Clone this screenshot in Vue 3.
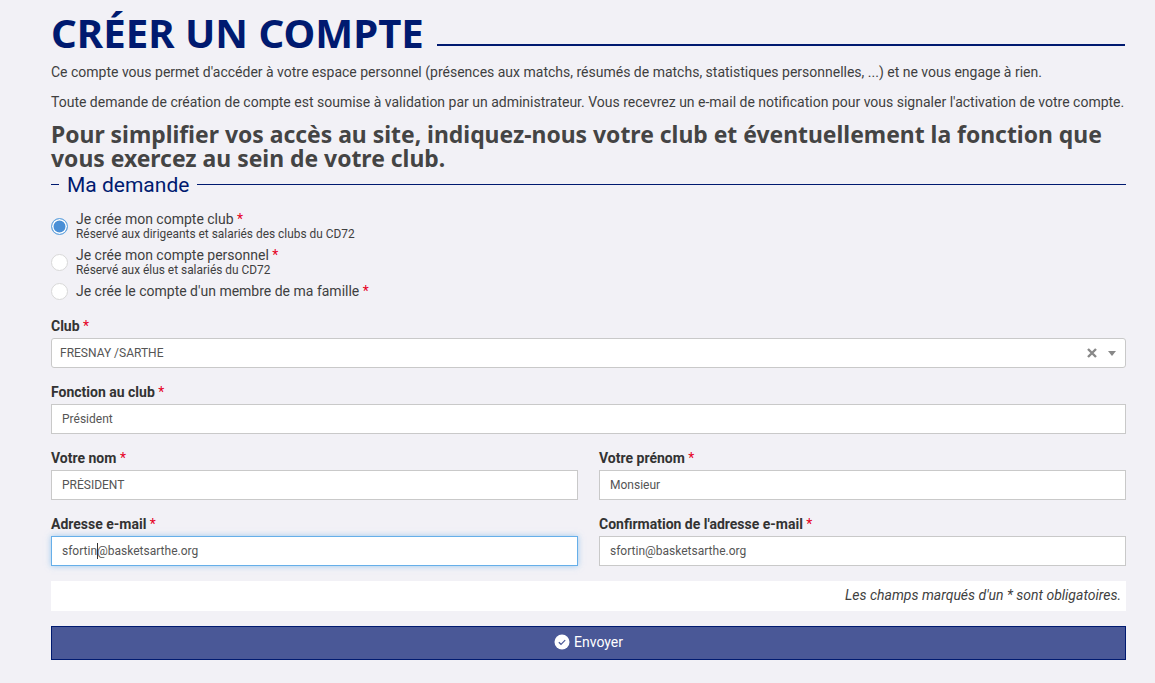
<script setup>
const choices = [
  { label: 'Je crée mon compte club', hint: 'Réservé aux dirigeants et salariés des clubs du CD72', checked: true },
  { label: 'Je crée mon compte personnel', hint: 'Réservé aux élus et salariés du CD72', checked: false },
  { label: "Je crée le compte d'un membre de ma famille", hint: '', checked: false },
]
</script>

<template>
  <div class="page">
    <h1 class="title"><span>CRÉER UN COMPTE</span></h1>
    <p class="intro">Ce compte vous permet d'accéder à votre espace personnel (présences aux matchs, résumés de matchs, statistiques personnelles, ...) et ne vous engage à rien.</p>
    <p class="intro">Toute demande de création de compte est soumise à validation par un administrateur. Vous recevrez un e-mail de notification pour vous signaler l'activation de votre compte.</p>
    <h2 class="lead">Pour simplifier vos accès au site, indiquez-nous votre club et éventuellement la fonction que vous exercez au sein de votre club.</h2>

    <form class="form" @submit.prevent>
      <div class="legend"><span>Ma demande</span></div>

      <div class="choices">
        <label v-for="c in choices" :key="c.label" class="choice">
          <input type="radio" name="kind" class="radio" :checked="c.checked" />
          <span class="choice-text">
            <span class="choice-label">{{ c.label }} <b class="req">*</b></span>
            <small v-if="c.hint" class="choice-hint">{{ c.hint }}</small>
          </span>
        </label>
      </div>

      <div class="field">
        <label class="label">Club <b class="req">*</b></label>
        <div class="select">
          <span class="select-value">FRESNAY /SARTHE</span>
          <svg class="select-clear" width="10" height="10" viewBox="0 0 10 10"><path d="M1 1l8 8M9 1l-8 8" stroke="#888" stroke-width="2.4" fill="none" /></svg>
          <span class="select-arrow"></span>
        </div>
      </div>

      <div class="field">
        <label class="label">Fonction au club <b class="req">*</b></label>
        <input class="input" type="text" value="Président" />
      </div>

      <div class="cols">
        <div class="field">
          <label class="label">Votre nom <b class="req">*</b></label>
          <input class="input" type="text" value="PRÉSIDENT" />
        </div>
        <div class="field">
          <label class="label">Votre prénom <b class="req">*</b></label>
          <input class="input" type="text" value="Monsieur" />
        </div>
        <div class="field">
          <label class="label">Adresse e-mail <b class="req">*</b></label>
          <div class="focus-wrap">
            <input class="input focused" type="text" value="sfortin@basketsarthe.org" />
            <span class="caret"></span>
          </div>
        </div>
        <div class="field">
          <label class="label">Confirmation de l'adresse e-mail <b class="req">*</b></label>
          <input class="input" type="text" value="sfortin@basketsarthe.org" />
        </div>
      </div>

      <p class="note">Les champs marqués d'un * sont obligatoires.</p>

      <button class="send" type="submit">
        <svg width="16" height="16" viewBox="0 0 16 16">
          <circle cx="8" cy="8" r="7.5" fill="#fff" />
          <path d="M4.8 8.2l2.2 2.1 4.2-4.2" stroke="#4a5897" stroke-width="1.2" fill="none" />
        </svg>
        Envoyer
      </button>
    </form>
  </div>
</template>

<style>
body {
  background: #f2f1f6;
}
</style>

<style scoped>
.page {
  box-sizing: border-box;
  width: 1155px;
  height: 683px;
  overflow: hidden;
  padding: 0 29px 0 51px;
  font-family: Roboto, "Liberation Sans", sans-serif;
  font-size: 14px;
  color: #3f3f3f;
}

.title {
  display: flex;
  align-items: flex-end;
  gap: 13px;
  margin: 0;
  height: 64px;
  font-family: "Noto Sans", sans-serif;
  font-size: 40.2px;
  font-weight: 700;
  line-height: 46px;
  color: #001a70;
}

.title span {
  margin-bottom: 8px;
}

.title::after {
  content: "";
  flex: 1;
  height: 2px;
  margin-bottom: 18px;
  margin-right: 1px;
  background: #001a70;
}

.intro {
  margin: 0 0 14px;
  line-height: 16px;
  white-space: nowrap;
}

.lead {
  margin: -1px 0 0;
  font-family: "Noto Sans", sans-serif;
  font-size: 22.9px;
  font-weight: 700;
  line-height: 24px;
  color: #444;
}

.form {
  display: flex;
  flex-direction: column;
  margin-top: 1px;
}

.legend {
  display: flex;
  align-items: center;
  gap: 8px;
  height: 26px;
  font-size: 21px;
  color: #001a70;
}

.legend::before,
.legend::after {
  content: "";
  height: 1px;
  margin-bottom: 2px;
  background: #001a70;
}

.legend::before {
  width: 8px;
}

.legend::after {
  flex: 1;
}

.choices {
  display: flex;
  flex-direction: column;
  gap: 6px;
  margin-top: 13px;
}

.choice {
  display: flex;
  align-items: center;
  gap: 8px;
  min-height: 30px;
}

.choice:last-child {
  min-height: 18px;
  margin-top: -1px;
}

.radio {
  appearance: none;
  flex: none;
  box-sizing: border-box;
  width: 17px;
  height: 17px;
  margin: 0;
  border: 1.5px solid #d8d8d8;
  border-radius: 50%;
  background: #fff;
}

.radio:checked {
  border-color: #6aa8e0;
  background: #4a8fd6;
  box-shadow: inset 0 0 0 1.5px #fff;
}

.choice-text {
  display: flex;
  flex-direction: column;
}

.choice-label {
  line-height: 16px;
}

.choice-hint {
  margin-top: 1px;
  font-size: 11.9px;
  line-height: 13px;
}

.req {
  font-weight: 400;
  color: #e6001f;
}

.field {
  display: flex;
  flex-direction: column;
  margin-top: 14px;
}

.choices + .field {
  margin-top: 16px;
}

.label {
  margin-bottom: 2px;
  line-height: 20px;
  font-weight: 700;
  color: #333;
}

.input,
.select {
  box-sizing: border-box;
  width: 100%;
  height: 30px;
  border: 1px solid #c9c9c9;
  background: #fff;
  font-family: inherit;
  font-size: 12px;
  color: #555;
}

.input {
  padding: 0 10px;
  outline: none;
}

.focused {
  border-color: #66afe9;
  box-shadow: 0 0 6px rgba(102, 175, 233, 0.6);
}

.focus-wrap {
  position: relative;
}

.caret {
  position: absolute;
  left: 46px;
  top: 7px;
  width: 1px;
  height: 16px;
  background: #333;
}

.select {
  display: flex;
  align-items: center;
  padding: 0 9px 0 8px;
  border-radius: 3px;
}

.select-value {
  flex: 1;
}

.select-arrow {
  width: 0;
  height: 0;
  margin-left: 11px;
  border-style: solid;
  border-width: 5px 4px 0;
  border-color: #888 transparent transparent;
}

.cols {
  display: grid;
  grid-template-columns: 527px 1fr;
  column-gap: 21px;
}

.note {
  margin: 15px 0 0;
  padding: 0 5px;
  height: 30px;
  background: #fff;
  font-style: italic;
  line-height: 28px;
  text-align: right;
}

.send {
  display: flex;
  align-items: center;
  justify-content: center;
  gap: 4px;
  width: 100%;
  height: 34px;
  margin-top: 15px;
  padding-bottom: 3px;
  border: 1px solid #001a70;
  background: #4a5897;
  font-family: inherit;
  font-size: 14px;
  color: #fff;
}
</style>
